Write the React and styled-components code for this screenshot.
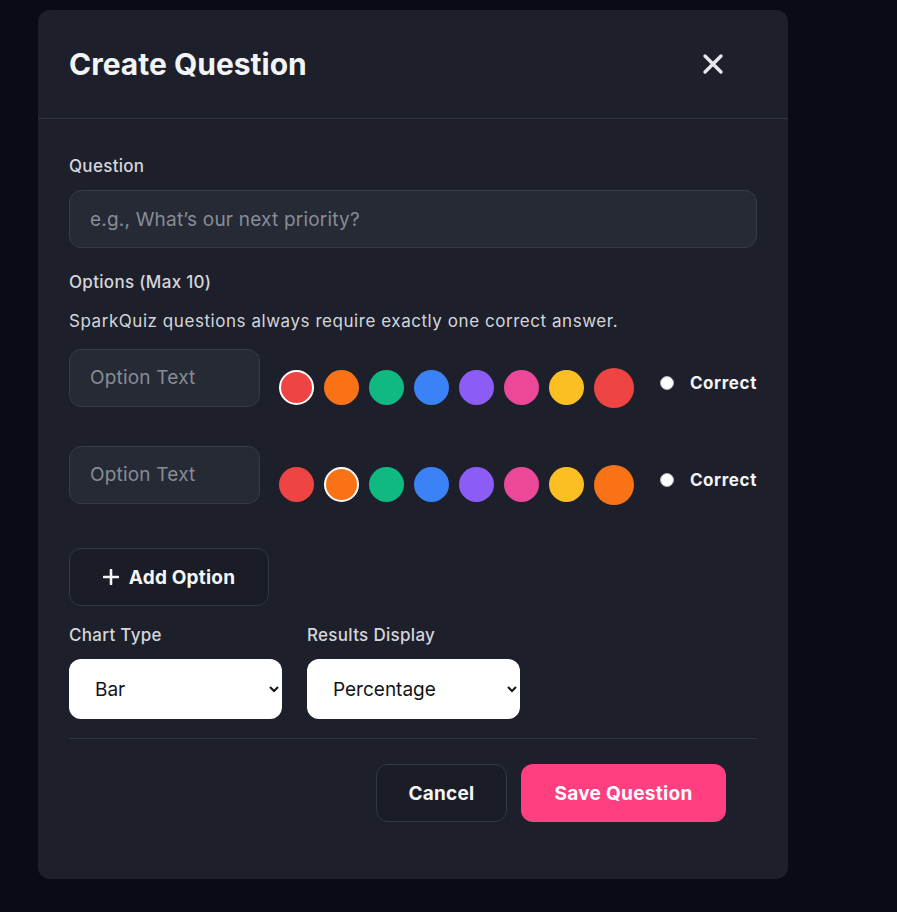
import React, { useState } from "react";
import styled, { createGlobalStyle } from "styled-components";

const GlobalStyle = createGlobalStyle`
  html, body {
    margin: 0;
    padding: 0;
    background: #0b0b17;
    font-family: Inter, "Noto Sans", "Liberation Sans", sans-serif;
  }
  * { box-sizing: border-box; }
`;

const Page = styled.div`
  min-height: 912px;
  padding: 10px 0 0 38px;
`;

const Modal = styled.div`
  width: 750px;
  background: #1d202a;
  border-radius: 12px;
  overflow: hidden;
`;

const Header = styled.div`
  display: flex;
  align-items: center;
  justify-content: space-between;
  height: 109px;
  padding: 0 64px 0 31px;
  border-bottom: 1px solid #30343f;
`;

const Title = styled.h2`
  margin: 0;
  font-size: 30px;
  font-weight: 700;
  color: #f3f4f6;
  letter-spacing: 0;
`;

const CloseButton = styled.button`
  display: flex;
  align-items: center;
  justify-content: center;
  padding: 0;
  border: none;
  background: none;
  cursor: pointer;
`;

const Body = styled.div`
  padding: 35px 31px 57px 31px;
`;

const Label = styled.div`
  font-size: 17px;
  font-weight: 500;
  line-height: 24px;
  letter-spacing: 0.3px;
  color: #d4d6dc;
  margin-bottom: ${(p) => p.$mb || 12}px;
`;

const Hint = styled.div`
  font-size: 17px;
  line-height: 24px;
  letter-spacing: 0.55px;
  color: #d4d6dc;
  margin-bottom: 15px;
`;

const TextInput = styled.input`
  display: block;
  width: ${(p) => p.$width || "100%"};
  height: 58px;
  padding: 0 20px;
  border-radius: 12px;
  border: 1px solid #363b47;
  background: #252a35;
  color: #f3f4f6;
  font-family: inherit;
  font-size: 19px;
  letter-spacing: 0.2px;
  outline: none;
  flex-shrink: 0;
  &::placeholder {
    color: #878c97;
  }
`;

const Section = styled.div`
  margin-top: ${(p) => p.$mt || 0}px;
`;

const OptionRow = styled.div`
  display: flex;
  align-items: center;
  height: 59px;
  margin-bottom: ${(p) => p.$mb || 0}px;
`;

const Swatches = styled.div`
  display: flex;
  align-items: center;
  gap: 10px;
  margin-left: 19px;
  padding-top: 20px;
`;

const Swatch = styled.button`
  width: ${(p) => p.$size}px;
  height: ${(p) => p.$size}px;
  border-radius: 50%;
  padding: 0;
  background: ${(p) => p.$color};
  border: ${(p) => (p.$selected ? "2px solid #ffffff" : "none")};
  cursor: pointer;
  flex-shrink: 0;
`;

const CorrectLabel = styled.label`
  display: flex;
  align-items: center;
  gap: 16px;
  margin-left: auto;
  padding-top: 11px;
  font-size: 17px;
  font-weight: 700;
  letter-spacing: 0.6px;
  color: #f3f4f6;
  cursor: pointer;
`;

const RadioDot = styled.span`
  width: 14px;
  height: 14px;
  border-radius: 50%;
  background: #ffffff;
  border: 1px solid #aeb2ba;
`;

const OutlineButton = styled.button`
  display: flex;
  align-items: center;
  justify-content: center;
  gap: 10px;
  width: ${(p) => p.$width}px;
  height: 58px;
  border-radius: 12px;
  border: 1px solid #333845;
  background: #1a1d26;
  color: #f5f6f8;
  font-family: inherit;
  font-size: 19px;
  font-weight: 700;
  letter-spacing: 0.2px;
  cursor: pointer;
`;

const SelectRow = styled.div`
  display: flex;
  gap: 25px;
  margin-top: 17px;
`;

const Field = styled.div`
  display: flex;
  flex-direction: column;
`;

const Select = styled.select`
  width: 213px;
  height: 60px;
  padding: 0 12px 0 22px;
  border-radius: 12px;
  border: none;
  background: #ffffff;
  color: #111318;
  font-family: inherit;
  font-size: 19px;
  outline: none;
`;

const Divider = styled.div`
  height: 1px;
  background: #30343f;
  margin: 19px 0 25px;
`;

const Footer = styled.div`
  display: flex;
  justify-content: flex-end;
  gap: 14px;
  padding-right: 31px;
`;

const PrimaryButton = styled.button`
  width: 205px;
  height: 58px;
  border-radius: 12px;
  border: none;
  background: #ff3f7f;
  color: #ffffff;
  font-family: inherit;
  font-size: 19px;
  font-weight: 700;
  letter-spacing: 0.3px;
  cursor: pointer;
`;

const COLORS = [
  "#ef4444",
  "#f97316",
  "#10b981",
  "#3b82f6",
  "#8b5cf6",
  "#ec4899",
  "#fbbf24",
];

function OptionLine({ selected, mb }) {
  return (
    <OptionRow $mb={mb}>
      <TextInput $width="191px" placeholder="Option Text" />
      <Swatches>
        {COLORS.map((c, i) => (
          <Swatch key={c} $color={c} $size={35} $selected={i === selected} />
        ))}
        <Swatch $color={COLORS[selected]} $size={40} />
      </Swatches>
      <CorrectLabel>
        <RadioDot />
        Correct
      </CorrectLabel>
    </OptionRow>
  );
}

export default function App() {
  const [chart, setChart] = useState("bar");
  const [display, setDisplay] = useState("percentage");

  return (
    <>
      <GlobalStyle />
      <Page>
        <Modal>
          <Header>
            <Title>Create Question</Title>
            <CloseButton aria-label="Close">
              <svg width="22" height="22" viewBox="0 0 22 22">
                <path
                  d="M3 3 L19 19 M19 3 L3 19"
                  stroke="#e5e7eb"
                  strokeWidth="3.4"
                  strokeLinecap="round"
                />
              </svg>
            </CloseButton>
          </Header>
          <Body>
            <Label>Question</Label>
            <TextInput placeholder="e.g., What’s our next priority?" />

            <Section $mt={22}>
              <Label $mb={15}>Options (Max 10)</Label>
              <Hint>SparkQuiz questions always require exactly one correct answer.</Hint>
              <OptionLine selected={0} mb={38} />
              <OptionLine selected={1} mb={44} />
            </Section>

            <OutlineButton $width={200}>
              <svg width="16" height="16" viewBox="0 0 16 16">
                <path
                  d="M8 1 V15 M1 8 H15"
                  stroke="#f5f6f8"
                  strokeWidth="2.6"
                  strokeLinecap="round"
                />
              </svg>
              Add Option
            </OutlineButton>

            <SelectRow>
              <Field>
                <Label>Chart Type</Label>
                <Select value={chart} onChange={(e) => setChart(e.target.value)}>
                  <option value="bar">Bar</option>
                  <option value="pie">Pie</option>
                  <option value="donut">Donut</option>
                </Select>
              </Field>
              <Field>
                <Label>Results Display</Label>
                <Select value={display} onChange={(e) => setDisplay(e.target.value)}>
                  <option value="percentage">Percentage</option>
                  <option value="count">Count</option>
                </Select>
              </Field>
            </SelectRow>

            <Divider />

            <Footer>
              <OutlineButton $width={131}>Cancel</OutlineButton>
              <PrimaryButton>Save Question</PrimaryButton>
            </Footer>
          </Body>
        </Modal>
      </Page>
    </>
  );
}
